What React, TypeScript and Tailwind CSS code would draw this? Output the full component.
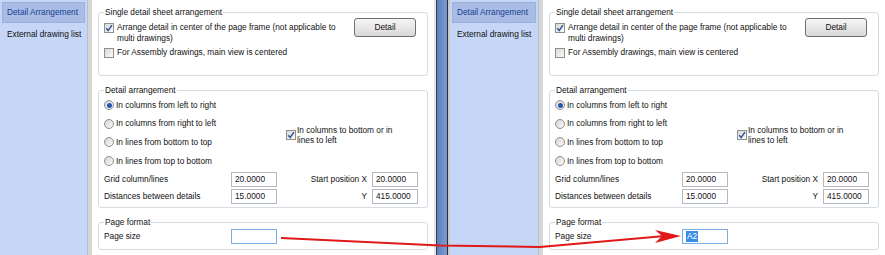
import React from "react";

function Check({ checked }: { checked?: boolean }) {
  return (
    <span className="relative inline-flex w-[10px] h-[10px] shrink-0 border border-[#8e8f8f] bg-linear-to-br from-[#d8d8d8] to-[#fbfbfb] items-center justify-center">
      {checked && (
        <svg width="10" height="10" viewBox="0 0 10 10" className="absolute left-[-1px] top-[-1px]">
          <path d="M2.3 5.2 L4.2 7.6 L7.9 2.2" stroke="#2f4f9a" strokeWidth="1.5" fill="none" />
        </svg>
      )}
    </span>
  );
}

function Radio({ checked }: { checked?: boolean }) {
  return (
    <span className="inline-flex w-[10px] h-[10px] shrink-0 rounded-full border border-[#8e8f8f] bg-linear-to-br from-[#d6d6d6] to-[#fafafa] items-center justify-center">
      {checked && <span className="w-[5px] h-[5px] rounded-full bg-[#2458b5]" />}
    </span>
  );
}

function Field({ children, focused }: { children?: React.ReactNode; focused?: boolean }) {
  return (
    <div
      className={
        "h-[15px] border flex items-center pl-[3px] bg-white " +
        (focused ? "border-[#7aaee3]" : "border-[#b5b8be]")
      }
    >
      {children}
    </div>
  );
}

function Panel({ sideW, right }: { sideW: string; right?: boolean }) {
  const radios = [
    "In columns from left to right",
    "In columns from right to left",
    "In lines from bottom to top",
    "In lines from top to bottom",
  ];
  return (
    <div className={"flex h-[255px] shrink-0 " + (right ? "w-[435px]" : "w-[434px]")}>
      <div className={"shrink-0 bg-[#c6d6f6] pt-[2px] pl-[2px] pr-[2px] " + sideW}>
        <div className="h-[21px] flex items-center pl-[4px] bg-[#a8bce6] border border-[#9bb1dc] text-[#1b3c8c]">
          Detail Arrangement
        </div>
        <div className="h-[22px] flex items-center pl-[5px] text-[#101010]">External drawing list</div>
      </div>
      <div className="w-[5px] shrink-0 bg-[#d6d6d6] border-l border-[#b8bfcc]" />
      <div className="flex-1 bg-white pl-[6px] pr-[6px] pt-[7px] flex flex-col">
        <fieldset className="border border-[#d3dce3] rounded-[3px] pl-[5px] pr-[11px] pb-[17px]">
          <legend className="ml-[0px] px-[1px] leading-[11px]">Single detail sheet arrangement</legend>
          <div className="flex items-start">
            <div className="flex items-start gap-[3px] mt-[4px]">
              <span className="mt-[1px] flex">
                <Check checked />
              </span>
              <div className="leading-[11px] whitespace-nowrap">
                Arrange detail in center of the page frame (not applicable to
                <br />
                multi drawings)
              </div>
            </div>
            <div className="ml-auto w-[62px] h-[19px] border border-[#707070] rounded-[3px] bg-linear-to-b from-[#f4f4f4] via-[#e8e8e8] to-[#d8d8d8] flex items-center justify-center">
              Detail
            </div>
          </div>
          <div className="flex items-center gap-[3px] mt-[3px] h-[11px]">
            <Check />
            <span className="whitespace-nowrap">For Assembly drawings, main view is centered</span>
          </div>
        </fieldset>

        <fieldset className="mt-[9px] border border-[#d3dce3] rounded-[3px] pl-[5px] pr-[4px] pb-[3px]">
          <legend className="px-[1px] leading-[11px]">Detail arrangement</legend>
          <div className="flex">
            <div className="w-[182px] flex flex-col">
              {radios.map((r, i) => (
                <div key={r} className="h-[18.6px] flex items-center gap-[2px] whitespace-nowrap">
                  <Radio checked={i === 0} />
                  <span>{r}</span>
                </div>
              ))}
            </div>
            <div className="flex items-center gap-[1px] mt-[3px]">
              <Check checked />
              <div className="leading-[10px] whitespace-nowrap">
                In columns to bottom or in
                <br />
                lines to left
              </div>
            </div>
          </div>
          <div className="grid grid-cols-[127px_46px_95px_46px] gap-y-[2px] items-center mt-[2px]">
            <span className="whitespace-nowrap">Grid column/lines</span>
            <Field>20.0000</Field>
            <span className="text-right pr-[5px] whitespace-nowrap">Start position X</span>
            <Field>20.0000</Field>
            <span className="whitespace-nowrap">Distances between details</span>
            <Field>15.0000</Field>
            <span className="text-right pr-[5px]">Y</span>
            <Field>415.0000</Field>
          </div>
        </fieldset>

        <fieldset className="mt-[9px] border border-[#d3dce3] rounded-[3px] pl-[5px] pb-[5px]">
          <legend className="px-[1px] leading-[11px]">Page format</legend>
          <div className="grid grid-cols-[127px_46px] items-center mt-[1px]">
            <span>Page size</span>
            <Field focused>
              {right && <span className="bg-[#3a8ee6] text-white leading-[11px] px-[1px]">A2</span>}
            </Field>
          </div>
        </fieldset>
      </div>
    </div>
  );
}

export default function App() {
  return (
    <div className="relative w-[885px] h-[255px] overflow-hidden bg-white font-['Liberation_Sans',Arial,sans-serif] text-[8.3px] text-[#111] leading-[11px]">
      <div className="flex">
        <Panel sideW="w-[87px]" />
        <div className="flex w-[16px] shrink-0 h-[255px]">
          <div className="w-[2px] bg-[#e4e4e4]" />
          <div className="w-[1px] bg-[#3c3c3c]" />
          <div className="w-[10px] bg-linear-to-r from-[#5d7fbf] to-[#7c9bd6]" />
          <div className="w-[1px] bg-[#2e2e2e]" />
          <div className="w-[2px] bg-[#c9c9c9]" />
        </div>
        <Panel sideW="w-[88px]" right />
      </div>
      <svg className="absolute inset-0 pointer-events-none" width="885" height="255" viewBox="0 0 885 255">
        <polyline
          points="281,238 440,245.5 540,247 665,236"
          fill="none"
          stroke="#e01818"
          strokeWidth="2"
        />
        <polygon points="655,230 681,236 655,243 662,236" fill="#e01818" />
      </svg>
    </div>
  );
}
